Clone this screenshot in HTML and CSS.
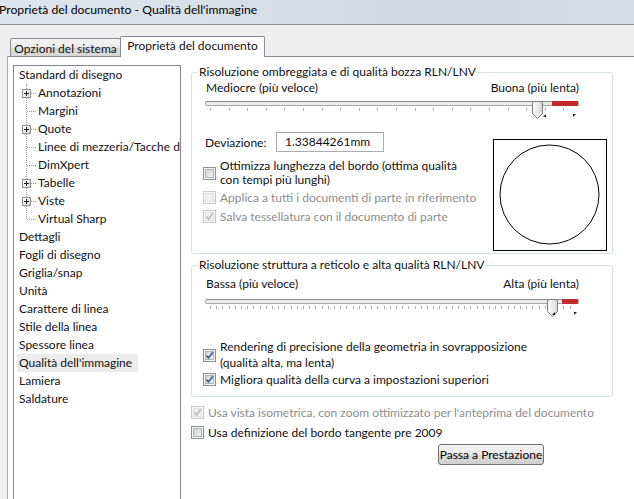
FILE: index.html
```html
<!DOCTYPE html>
<html lang="it">
<head>
<meta charset="utf-8">
<title>Proprietà del documento</title>
<link rel="stylesheet" href="styles.css">
</head>
<body>
<svg class="defs" width="0" height="0" aria-hidden="true">
  <defs>
    <linearGradient id="thumbGrad" x1="0" y1="0" x2="1" y2="0">
      <stop offset="0" stop-color="#fafafa"/>
      <stop offset="0.5" stop-color="#ececec"/>
      <stop offset="1" stop-color="#d6d6d6"/>
    </linearGradient>
    <linearGradient id="boxGrad" x1="0" y1="0" x2="1" y2="1">
      <stop offset="0" stop-color="#cfd3d8"/>
      <stop offset="1" stop-color="#f3f4f5"/>
    </linearGradient>
    <linearGradient id="plusGrad" x1="0" y1="0" x2="1" y2="1">
      <stop offset="0" stop-color="#ffffff"/>
      <stop offset="1" stop-color="#d8d8d8"/>
    </linearGradient>
  </defs>
</svg>

<div class="titlebar"><span class="title">Proprietà del documento - Qualità dell'immagine</span></div>

<div class="tabstrip">
  <div class="tab tab-sys">Opzioni del sistema</div>
  <div class="tab tab-active">Proprietà del documento</div>
</div>

<div class="page">
  <div class="tree">
    <div class="node root"><span class="lbl">Standard di disegno</span></div>
    <div class="node child"><span class="conn"><svg class="plus" width="9" height="9" viewBox="0 0 9 9"><rect x=".5" y=".5" width="8" height="8" fill="url(#plusGrad)" stroke="#919191"/><path d="M2 4.5h5M4.5 2v5" stroke="#222"/></svg></span><span class="lbl">Annotazioni</span></div>
    <div class="node child"><span class="conn"></span><span class="lbl">Margini</span></div>
    <div class="node child"><span class="conn"><svg class="plus" width="9" height="9" viewBox="0 0 9 9"><rect x=".5" y=".5" width="8" height="8" fill="url(#plusGrad)" stroke="#919191"/><path d="M2 4.5h5M4.5 2v5" stroke="#222"/></svg></span><span class="lbl">Quote</span></div>
    <div class="node child"><span class="conn"></span><span class="lbl clip">Linee di mezzeria/Tacche di centro</span></div>
    <div class="node child"><span class="conn"></span><span class="lbl">DimXpert</span></div>
    <div class="node child"><span class="conn"><svg class="plus" width="9" height="9" viewBox="0 0 9 9"><rect x=".5" y=".5" width="8" height="8" fill="url(#plusGrad)" stroke="#919191"/><path d="M2 4.5h5M4.5 2v5" stroke="#222"/></svg></span><span class="lbl">Tabelle</span></div>
    <div class="node child"><span class="conn"><svg class="plus" width="9" height="9" viewBox="0 0 9 9"><rect x=".5" y=".5" width="8" height="8" fill="url(#plusGrad)" stroke="#919191"/><path d="M2 4.5h5M4.5 2v5" stroke="#222"/></svg></span><span class="lbl">Viste</span></div>
    <div class="node child last"><span class="conn"></span><span class="lbl">Virtual Sharp</span></div>
    <div class="node root"><span class="lbl">Dettagli</span></div>
    <div class="node root"><span class="lbl">Fogli di disegno</span></div>
    <div class="node root"><span class="lbl">Griglia/snap</span></div>
    <div class="node root"><span class="lbl">Unità</span></div>
    <div class="node root"><span class="lbl">Carattere di linea</span></div>
    <div class="node root"><span class="lbl">Stile della linea</span></div>
    <div class="node root"><span class="lbl">Spessore linea</span></div>
    <div class="node root selected"><span class="lbl">Qualità dell'immagine</span></div>
    <div class="node root"><span class="lbl">Lamiera</span></div>
    <div class="node root"><span class="lbl">Saldature</span></div>
  </div>

  <div class="right">
    <fieldset class="group g1">
      <legend>Risoluzione ombreggiata e di qualità bozza RLN/LNV</legend>
      <div class="range-labels"><span>Mediocre (più veloce)</span><span>Buona (più lenta)</span></div>
      <div class="slider">
        <div class="track"><span class="range" style="width:26px"></span></div>
        <div class="ticks ticks-wide"></div>
        <svg class="thumb" style="left:327px" width="11" height="18" viewBox="0 0 11 18"><path d="M.5 2.5Q.5.5 2.5.5H8.5Q10.5.5 10.5 2.5V12.5L5.5 17.5.5 12.5Z" fill="url(#thumbGrad)" stroke="#7b7b7b"/></svg>
        <i class="mark mark-l" style="left:338px"></i><i class="mark mark-r" style="left:368px"></i>
      </div>
      <div class="g1-body">
        <div class="g1-left">
          <div class="dev"><span class="dev-label">Deviazione:</span><div class="input">1.33844261mm</div></div>
          <div class="cb cb-opt">
            <svg width="13" height="13" viewBox="0 0 13 13"><rect x=".5" y=".5" width="12" height="12" fill="#f6f6f6" stroke="#8e8f8f"/><rect x="2.5" y="2.5" width="8" height="8" fill="url(#boxGrad)" stroke="#aeb3b9"/></svg>
            <span>Ottimizza lunghezza del bordo (ottima qualità<br>con tempi più lunghi)</span>
          </div>
          <div class="cb cb-apply disabled">
            <svg width="13" height="13" viewBox="0 0 13 13"><rect x=".5" y=".5" width="12" height="12" fill="#f7f7f7" stroke="#c9c9c9"/><rect x="2.5" y="2.5" width="8" height="8" fill="#f1f1f1" stroke="#e0e0e0"/></svg>
            <span>Applica a tutti i documenti di parte in riferimento</span>
          </div>
          <div class="cb cb-save disabled">
            <svg width="13" height="13" viewBox="0 0 13 13"><rect x=".5" y=".5" width="12" height="12" fill="#f7f7f7" stroke="#c9c9c9"/><rect x="2.5" y="2.5" width="8" height="8" fill="#f1f1f1" stroke="#e0e0e0"/><path d="M3.5 6.5L5.5 9 9.8 3.3" fill="none" stroke="#b9b9b9" stroke-width="1.5"/></svg>
            <span>Salva tessellatura con il documento di parte</span>
          </div>
        </div>
        <div class="preview">
          <svg width="112" height="110" viewBox="0 0 112 110"><circle cx="55.5" cy="54.5" r="49.5" fill="none" stroke="#000" stroke-width="1"/></svg>
        </div>
      </div>
    </fieldset>

    <fieldset class="group g2">
      <legend>Risoluzione struttura a reticolo e alta qualità RLN/LNV</legend>
      <div class="range-labels"><span>Bassa (più veloce)</span><span>Alta (più lenta)</span></div>
      <div class="slider">
        <div class="track"><span class="range" style="width:16px"></span></div>
        <div class="ticks ticks-dense"></div>
        <svg class="thumb" style="left:342px" width="11" height="18" viewBox="0 0 11 18"><path d="M.5 2.5Q.5.5 2.5.5H8.5Q10.5.5 10.5 2.5V12.5L5.5 17.5.5 12.5Z" fill="url(#thumbGrad)" stroke="#7b7b7b"/></svg>
        <i class="mark mark-l" style="left:347px"></i><i class="mark mark-r" style="left:369px"></i>
      </div>
      <div class="cb cb-render">
        <svg width="13" height="13" viewBox="0 0 13 13"><rect x=".5" y=".5" width="12" height="12" fill="#f6f6f6" stroke="#8e8f8f"/><rect x="2.5" y="2.5" width="8" height="8" fill="url(#boxGrad)" stroke="#aeb3b9"/><path d="M3.5 6.5L5.5 9 9.8 3.3" fill="none" stroke="#3f5a95" stroke-width="1.6"/></svg>
        <span>Rendering di precisione della geometria in sovrapposizione<br>(qualità alta, ma lenta)</span>
      </div>
      <div class="cb cb-curve">
        <svg width="13" height="13" viewBox="0 0 13 13"><rect x=".5" y=".5" width="12" height="12" fill="#f6f6f6" stroke="#8e8f8f"/><rect x="2.5" y="2.5" width="8" height="8" fill="url(#boxGrad)" stroke="#aeb3b9"/><path d="M3.5 6.5L5.5 9 9.8 3.3" fill="none" stroke="#3f5a95" stroke-width="1.6"/></svg>
        <span>Migliora qualità della curva a impostazioni superiori</span>
      </div>
    </fieldset>

    <div class="cb cb-iso disabled">
      <svg width="13" height="13" viewBox="0 0 13 13"><rect x=".5" y=".5" width="12" height="12" fill="#f7f7f7" stroke="#c9c9c9"/><rect x="2.5" y="2.5" width="8" height="8" fill="#f1f1f1" stroke="#e0e0e0"/><path d="M3.5 6.5L5.5 9 9.8 3.3" fill="none" stroke="#b9b9b9" stroke-width="1.5"/></svg>
      <span>Usa vista isometrica, con zoom ottimizzato per l'anteprima del documento</span>
    </div>
    <div class="cb cb-tan">
      <svg width="13" height="13" viewBox="0 0 13 13"><rect x=".5" y=".5" width="12" height="12" fill="#f6f6f6" stroke="#8e8f8f"/><rect x="2.5" y="2.5" width="8" height="8" fill="url(#boxGrad)" stroke="#aeb3b9"/></svg>
      <span>Usa definizione del bordo tangente pre 2009</span>
    </div>
    <button class="btn" type="button">Passa a Prestazione</button>
  </div>
</div>
</body>
</html>
```
FILE: styles.css
```css
* { box-sizing: border-box; }
html, body { margin: 0; height: 499px; overflow: hidden; }
body {
  font-family: Lato, "Segoe UI", "Liberation Sans", sans-serif;
  font-size: 12px;
  color: #111;
  background: #f0f0f0;
}
.defs { display: block; width: 0; height: 0; overflow: hidden; }

/* title bar */
.titlebar {
  height: 25px;
  border-bottom: 1px solid #8b8e93;
  background: linear-gradient(to right, #dfe5ec 0, #d7dde5 45%, #d3d9e1 70%, #d7dde4 100%);
  padding-top: 2px;
  line-height: 16px;
  white-space: nowrap;
}
.title { display: inline-block; margin-left: -1px; font-size: 12.2px; color: #000; }

/* tabs */
.tabstrip {
  height: 31px;
  display: flex;
  align-items: flex-end;
  padding-left: 10px;
  background: #efefef;
}
.tab {
  height: 18px;
  border: 1px solid #898c95;
  border-bottom: none;
  border-radius: 2px 2px 0 0;
  line-height: 14px;
  padding-top: 3px;
  text-align: center;
  white-space: nowrap;
  background: linear-gradient(#f3f3f3, #e9e9e9 50%, #dcdcdc 51%, #d6d6d6);
}
.tab-sys { width: 111px; }
.tab-active {
  width: 145px;
  height: 21px;
  margin-left: -1px;
  margin-bottom: -1px;
  padding-top: 2px;
  background: #fff;
  position: relative;
  z-index: 1;
}

/* page */
.page {
  margin-left: 7px;
  height: 480px;
  border-left: 1px solid #a9abb0;
  border-top: 1px solid #898c95;
  background: #fff;
  display: flex;
  align-items: flex-start;
  padding: 8px 0 0 5px;
}

/* tree */
.tree {
  flex: none;
  width: 168px;
  height: 460px;
  border: 1px solid #828790;
  overflow: hidden;
  background: #fff;
}
.node {
  height: 18px;
  display: flex;
  align-items: center;
  white-space: nowrap;
  line-height: 18px;
}
.root { padding-left: 3px; }
.lbl { padding: 0 2px; }
.selected .lbl { background: #ececec; padding-right: 6px; }
.child .lbl { padding-left: 0; }
.clip { min-width: 0; overflow: hidden; }
.conn {
  flex: none;
  width: 12px;
  height: 18px;
  margin-left: 12px;
  display: flex;
  align-items: center;
  background:
    repeating-linear-gradient(to bottom, #9c9c9c 0 1px, transparent 1px 2px) 0 0 / 1px 100% no-repeat,
    repeating-linear-gradient(to right, #9c9c9c 0 1px, transparent 1px 2px) 1px 9px / 10px 1px no-repeat;
}
.last .conn {
  background:
    repeating-linear-gradient(to bottom, #9c9c9c 0 1px, transparent 1px 2px) 0 0 / 1px 10px no-repeat,
    repeating-linear-gradient(to right, #9c9c9c 0 1px, transparent 1px 2px) 1px 9px / 10px 1px no-repeat;
}
.plus { display: block; margin-left: -4px; flex: none; }

/* right column */
.right { flex: none; width: 422px; margin-left: 10px; }
.group {
  margin: 0;
  padding: 0;
  border: 1px solid #d5dfe5;
  border-radius: 3px;
  min-width: 0;
}
.group legend {
  padding: 0 2px;
  margin-left: 5px;
  line-height: 14px;
}
.g1 { padding-bottom: 2px; }
.g2 { margin-top: 4px; padding-bottom: 9px; }

.range-labels {
  display: flex;
  justify-content: space-between;
  margin: 2px 33px 0 14px;
  line-height: 14px;
}
.g2 .range-labels { margin-top: 5px; }

.slider {
  position: relative;
  height: 26px;
  margin: 3px 33px 0 13px;
}
.g2 .slider { margin-top: 8px; }
.track {
  margin-top: 6px;
  height: 5px;
  border: 1px solid #a9a9a9;
  border-top-color: #8c8c8c;
  border-radius: 2px;
  background: #e8eaec;
  display: flex;
  justify-content: flex-end;
}
.range {
  display: block;
  height: 5px;
  margin: -1px 0;
  background: #c4282c;
  border-radius: 1px;
}
.ticks {
  height: 3px;
  margin: 2px 6px 0 5px;
}
.ticks-wide { background: repeating-linear-gradient(to right, #b0b0b0 0 1px, transparent 1px 18.6px); }
.ticks-dense { background: repeating-linear-gradient(to right, #b0b0b0 0 1px, transparent 1px 6.2px); }
.thumb { position: absolute; top: 0; display: block; }
.mark {
  position: absolute;
  top: 13px;
  width: 0;
  height: 0;
}
.mark-l { border-left: 3px solid transparent; border-bottom: 3px solid #222; }
.mark-r { border-right: 3px solid transparent; border-top: 3px solid #222; }

.g1-body { display: flex; align-items: flex-start; margin-top: 5px; }
.g1-left { flex: 1; padding-left: 11px; }
.dev { display: flex; align-items: center; height: 20px; }
.dev-label { width: 71px; margin-left: 2px; }
.input {
  width: 108px;
  height: 20px;
  border: 1px solid #abadb3;
  border-top-color: #9a9ca3;
  padding-left: 8px;
  line-height: 18px;
}
.preview {
  flex: none;
  width: 114px;
  height: 112px;
  border: 1px solid #000;
  margin: 7px 5px 0 0;
}
.preview svg { display: block; }

/* checkboxes */
.cb { display: flex; align-items: center; line-height: 15px; white-space: nowrap; }
.cb svg { flex: none; display: block; margin-right: 4px; }
.disabled { color: #8d8d8d; }
.cb-opt { margin-top: 7px; line-height: 14px; }
.cb-apply { margin-top: 3px; }
.cb-save { margin-top: 4px; }
.g2 .cb { margin-left: 11px; }
.cb-render { margin-top: 14px; line-height: 16px; }
.cb-curve { margin-top: 1px; }
.cb-iso { margin-top: 8px; }
.cb-tan { margin-top: 5px; }

.btn {
  display: block;
  margin: 4px 0 0 247px;
  width: 106px;
  height: 21px;
  padding: 0;
  border: 1px solid #707070;
  border-radius: 3px;
  background: linear-gradient(#f2f2f2 0, #ebebeb 50%, #dddddd 51%, #cfcfcf 100%);
  font: inherit;
  color: #000;
  line-height: 19px;
  text-align: center;
}
```
